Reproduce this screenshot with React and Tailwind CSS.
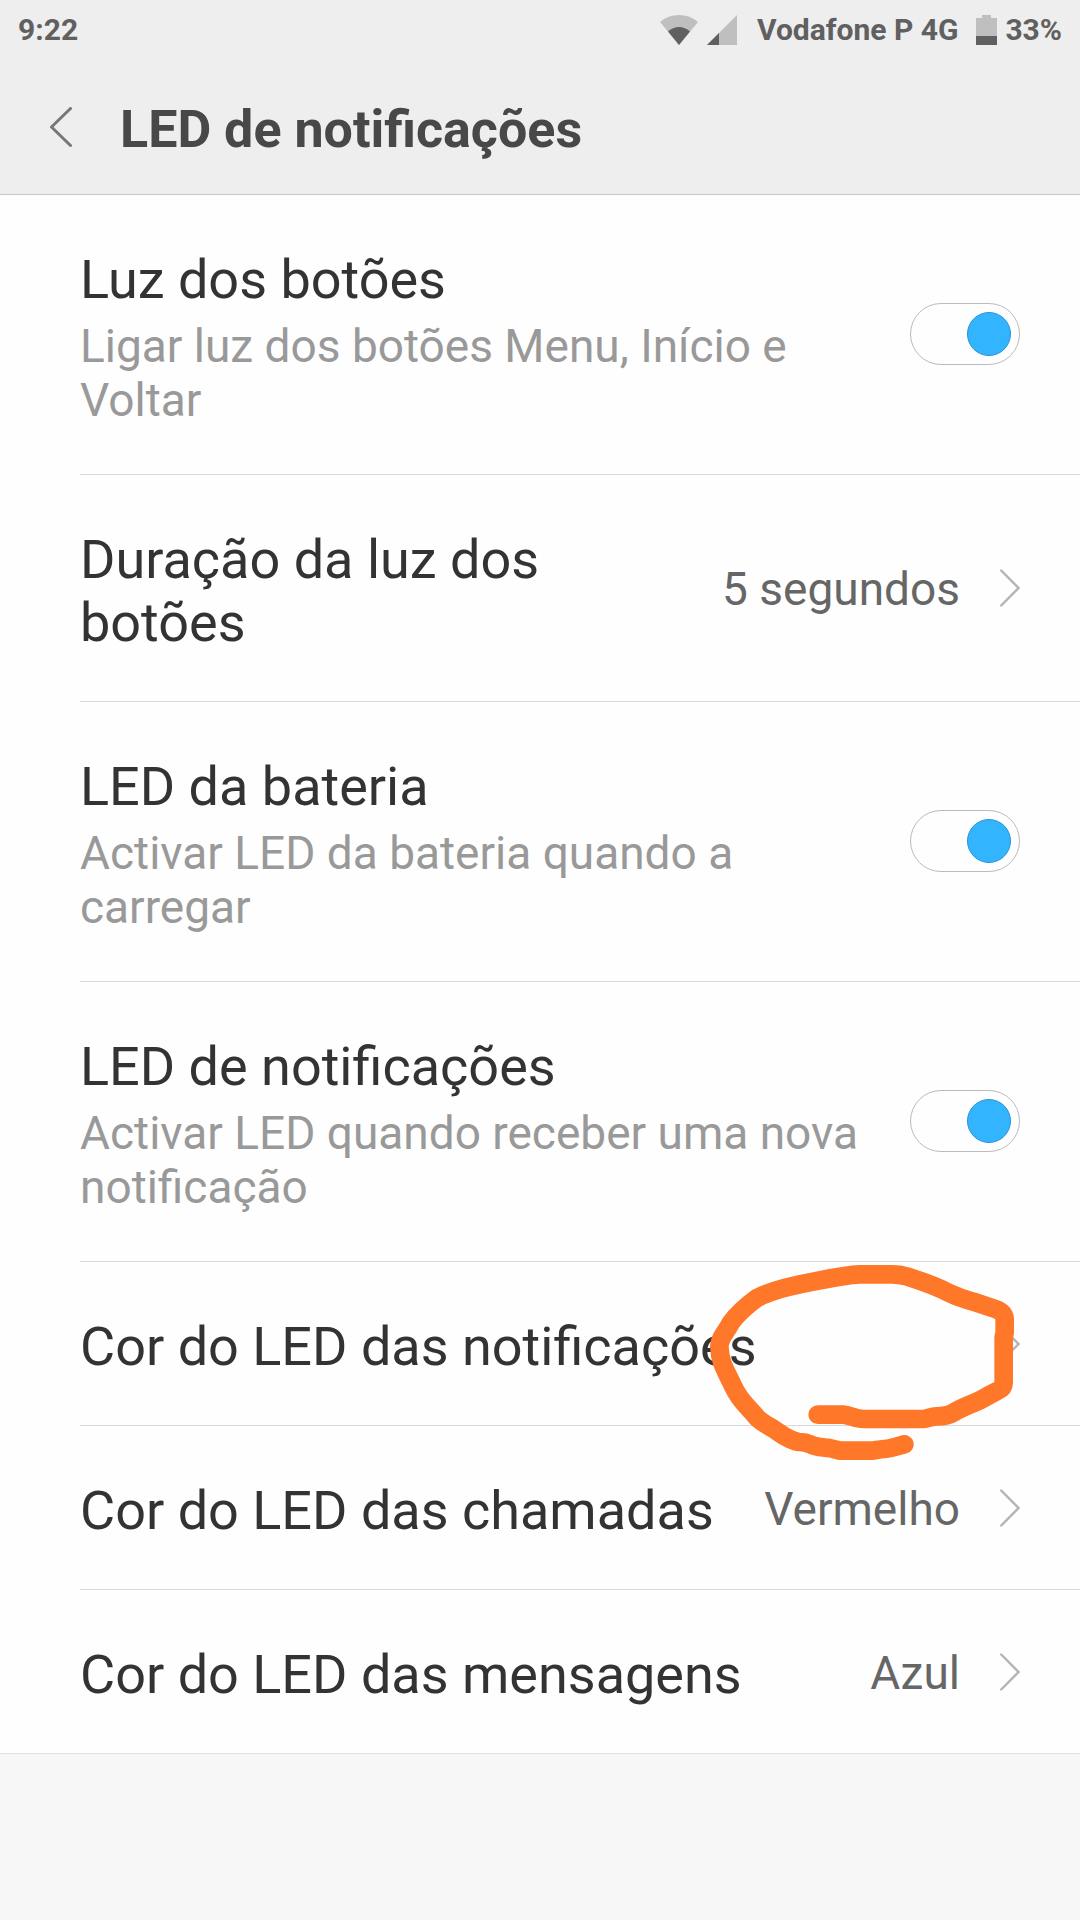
// ════════════════════════════════════════════════════════════════════════
//  LedSettings  (Definições → LED de notificações)
// ════════════════════════════════════════════════════════════════════════
import { useState } from 'react';

const ROWS = [
  { id: 'buttons', title: 'Luz dos botões', summary: 'Ligar luz dos botões Menu, Início e Voltar', toggle: true },
  { id: 'duration', title: 'Duração da luz dos botões', value: '5 segundos' },
  { id: 'battery', title: 'LED da bateria', summary: 'Activar LED da bateria quando a carregar', toggle: true },
  { id: 'notifications', title: 'LED de notificações', summary: 'Activar LED quando receber uma nova notificação', toggle: true },
  { id: 'notificationColor', title: 'Cor do LED das notificações', marked: true },
  { id: 'callColor', title: 'Cor do LED das chamadas', value: 'Vermelho' },
  { id: 'messageColor', title: 'Cor do LED das mensagens', value: 'Azul' },
];

function StatusBar() {
  return (
    <div className="flex h-[60px] items-center justify-between px-[18px] text-[30px] leading-none font-bold text-[#606060]">
      <span>9:22</span>
      <div className="flex items-center">
        {/* wifi */}
        <svg className="h-[30px] w-[38px]" viewBox="0 0 38 30" aria-hidden="true">
          <path d="M0 7Q8 0 19 0T38 7L19 30Z" fill="#bfbfbf" />
          <path d="M8 16.5Q13 12 19 12T30 16.5L19 30Z" fill="#606060" />
        </svg>
        {/* signal */}
        <svg className="ml-[9px] h-[30px] w-[30px]" viewBox="0 0 30 30" aria-hidden="true">
          <path d="M30 0V30H0Z" fill="#bfbfbf" />
          <path d="M12 18V30H0Z" fill="#606060" />
        </svg>
        <span className="ml-5">Vodafone P 4G</span>
        {/* battery */}
        <svg className="ml-[18px] h-[30px] w-[21px]" viewBox="0 0 21 30" aria-hidden="true">
          <path d="M6 0H15V3H21V21H0V3H6Z" fill="#bfbfbf" />
          <path d="M0 21H21V30H0Z" fill="#606060" />
        </svg>
        <span className="ml-2">33%</span>
      </div>
    </div>
  );
}

function Chevron() {
  return (
    <svg className="h-[38px] w-5 shrink-0" viewBox="0 0 20 38" fill="none" stroke="#b3b3b3" strokeWidth="2.4" strokeLinecap="round" aria-hidden="true">
      <path d="M1.2 1.5L18.5 19L1.2 36.5" />
    </svg>
  );
}

// Hand-drawn marker loop over the notification colour value
function Marker() {
  return (
    <svg
      className="pointer-events-none absolute right-0 -top-[22px] z-10 h-[240px] w-[380px]"
      viewBox="0 0 1140 720"
      fill="none"
      stroke="#ff7729"
      strokeWidth="56"
      strokeLinecap="round"
      strokeLinejoin="round"
      aria-hidden="true"
    >
      <path d="M353 524H432C452 527 468 537 490 537H670C685 535 693 530 710 529C735 529 750 524 762 517C785 502 815 493 845 478C865 468 875 460 893 452Q911 444 911 428V292L914 278V236Q912 216 886 207L820 185Q778 174 745 158C705 136 672 126 620 109Q600 103 575 103H480Q440 104 340 125Q225 146 171 174Q120 211 92 249C83 270 58 292 58 320C60 370 78 392 100 440C120 485 145 500 170 532C190 553 215 560 237 578C255 592 285 605 298 606C325 606 330 614 345 618C365 624 375 622 388 624L420 632H515C530 630 540 628 553 627C575 625 595 618 613 613" />
    </svg>
  );
}

function Text({ title, summary, id }) {
  return (
    <span className="min-w-0 flex-1 pt-[53px] pb-[47px] text-left">
      <span id={`${id}-title`} className="block text-[54px] leading-[63px] text-[#333333]">{title}</span>
      {summary && (
        <span id={`${id}-summary`} className="mt-2 block text-[46px] leading-[54px] text-[#999999]">{summary}</span>
      )}
    </span>
  );
}

function ToggleRow({ id, title, summary }) {
  const [on, setOn] = useState(true);

  return (
    <label htmlFor={id} className="flex items-center gap-10 pr-[60px]">
      <Text id={id} title={title} summary={summary} />
      <input
        id={id}
        type="checkbox"
        role="switch"
        checked={on}
        onChange={(e) => setOn(e.target.checked)}
        aria-labelledby={`${id}-title`}
        aria-describedby={`${id}-summary`}
        className="mb-0.5 flex h-[62px] w-[110px] shrink-0 appearance-none items-center rounded-full border border-[#bbbbbb] bg-[#fefefe] px-2 before:size-11 before:rounded-full before:border before:border-[#bbbbbb] before:bg-white checked:justify-end checked:before:border-[#2b93d8] checked:before:bg-[#33b4ff]"
      />
    </label>
  );
}

function LinkRow({ id, title, value, marked }) {
  return (
    <button type="button" className="relative flex w-full items-center pr-[60px]">
      <Text id={id} title={title} />
      {value && <span className="ml-8 pt-0.5 text-[46px] leading-[54px] text-[#666666]">{value}</span>}
      <span className="ml-10 flex">
        <Chevron />
      </span>
      {marked && <Marker />}
    </button>
  );
}

export default function App() {
  return (
    <div className="min-h-screen bg-[#f7f7f7] font-[Roboto,sans-serif]">
      <header className="border-b border-[#c8c8c8] bg-[#eeeeee]">
        <StatusBar />
        <div className="flex h-[134px] items-center pl-[50px]">
          <button type="button" aria-label="Voltar">
            <svg className="h-10 w-[22px]" viewBox="0 0 22 40" fill="none" stroke="#777777" strokeWidth="3" strokeLinecap="round" strokeLinejoin="round" aria-hidden="true">
              <path d="M20.5 1.5L1.5 20L20.5 38.5" />
            </svg>
          </button>
          <h1 className="ml-12 pt-1.5 text-[52px] leading-[60px] font-bold text-[#484848]">LED de notificações</h1>
        </div>
      </header>

      <main className="border-b border-[#e2e2e2] bg-[#fefefe]">
        <ul className="divide-y divide-[#d9d9d9] pl-20">
          {ROWS.map(({ toggle, ...row }) => (
            <li key={row.id}>
              {toggle ? <ToggleRow {...row} /> : <LinkRow {...row} />}
            </li>
          ))}
        </ul>
      </main>
    </div>
  );
}
